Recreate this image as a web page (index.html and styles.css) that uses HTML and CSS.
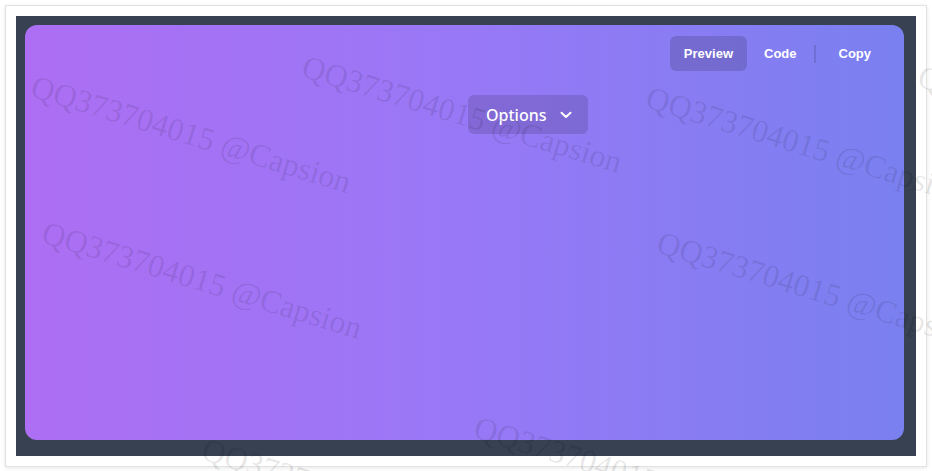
FILE: index.html
```html
<!DOCTYPE html>
<html lang="en">
<head>
<meta charset="utf-8">
<title>Preview</title>
<link rel="stylesheet" href="styles.css">
</head>
<body>
<div class="frame">
  <div class="stage">
    <div class="canvas">
      <div class="toolbar">
        <button class="tab active">Preview</button>
        <button class="tab">Code</button>
        <span class="sep"></span>
        <button class="tab copy">Copy</button>
      </div>
      <div class="options-row">
        <button class="options">
          <span>Options</span>
          <svg class="chev" width="12" height="8" viewBox="0 0 12 8"><path d="M1.5 1.8 L6 6 L10.5 1.8" fill="none" stroke="#fff" stroke-width="2" stroke-linecap="round" stroke-linejoin="round"/></svg>
        </button>
      </div>
    </div>
  </div>
</div>
<div class="watermarks" aria-hidden="true">
  <span class="wm wm1">QQ373704015 @Capsion</span>
  <span class="wm wm2">QQ373704015 @Capsion</span>
  <span class="wm wm3">QQ373704015 @Capsion</span>
  <span class="wm wm4">QQ373704015 @Capsion</span>
  <span class="wm wm5">QQ373704015 @Capsion</span>
  <span class="wm wm6">QQ373704015 @Capsion</span>
  <span class="wm wm7">QQ373704015 @Capsion</span>
  <span class="wm wm8">QQ373704015 @Capsion</span>
</div>
</body>
</html>
```
FILE: styles.css
```css
html, body {
  margin: 0;
  height: 100%;
  overflow: hidden;
  background: #fff;
}
body {
  position: relative;
  font-family: "Liberation Sans", Arial, sans-serif;
}
.frame {
  margin: 5px;
  width: 922px;
  height: 462px;
  box-sizing: border-box;
  border: 1px solid #e2e2e2;
  box-shadow: 0 1px 4px rgba(0, 0, 0, 0.1);
  padding: 10px;
  background: #fff;
}
.stage {
  height: 100%;
  box-sizing: border-box;
  background: #374151;
  padding: 9px 12px 16px 9px;
}
.canvas {
  height: 100%;
  box-sizing: border-box;
  border-radius: 12px;
  background: linear-gradient(90deg, #ad6ef3 0%, #9878f6 50%, #7a80f0 100%);
  display: flex;
  flex-direction: column;
  padding: 11px 19px 0 0;
}
.toolbar {
  display: flex;
  justify-content: flex-end;
  align-items: center;
}
.tab {
  height: 35px;
  padding: 0 14px;
  margin: 0;
  border: 0;
  border-radius: 6px;
  background: transparent;
  color: #fff;
  font-family: "Liberation Sans", Arial, sans-serif;
  font-weight: 700;
  font-size: 13px;
  cursor: pointer;
}
.tab.active {
  background: rgba(0, 0, 0, 0.14);
  margin-right: 3px;
}
.sep {
  width: 2px;
  height: 18px;
  background: rgba(0, 0, 0, 0.12);
  margin: 0 9px 0 3px;
}
.options-row {
  display: flex;
  padding-left: 443px;
  margin-top: 24px;
}
.options {
  display: flex;
  align-items: center;
  gap: 13px;
  height: 39px;
  padding: 0 16px 0 18px;
  border: 0;
  border-radius: 6px;
  background: rgba(0, 0, 0, 0.13);
  color: #fff;
  font-family: "Noto Sans", "Open Sans", sans-serif;
  font-size: 16px;
  font-weight: 500;
}
.chev {
  display: block;
}
.watermarks {
  position: absolute;
  inset: 0;
  pointer-events: none;
  overflow: hidden;
}
.wm {
  position: absolute;
  white-space: nowrap;
  font-family: "Liberation Serif", "Times New Roman", serif;
  font-size: 32px;
  line-height: 1;
  color: rgba(0, 0, 0, 0.1);
  transform-origin: 0 0;
  transform: rotate(17deg);
}
.wm1 { left: 37px; top: 70px; }
.wm2 { left: 308px; top: 50px; }
.wm3 { left: 652px; top: 81px; }
.wm4 { left: 48px; top: 216px; }
.wm5 { left: 663px; top: 226px; }
.wm6 { left: 208px; top: 433px; }
.wm7 { left: 480px; top: 411px; }
.wm8 { left: 924px; top: 60px; }
```
